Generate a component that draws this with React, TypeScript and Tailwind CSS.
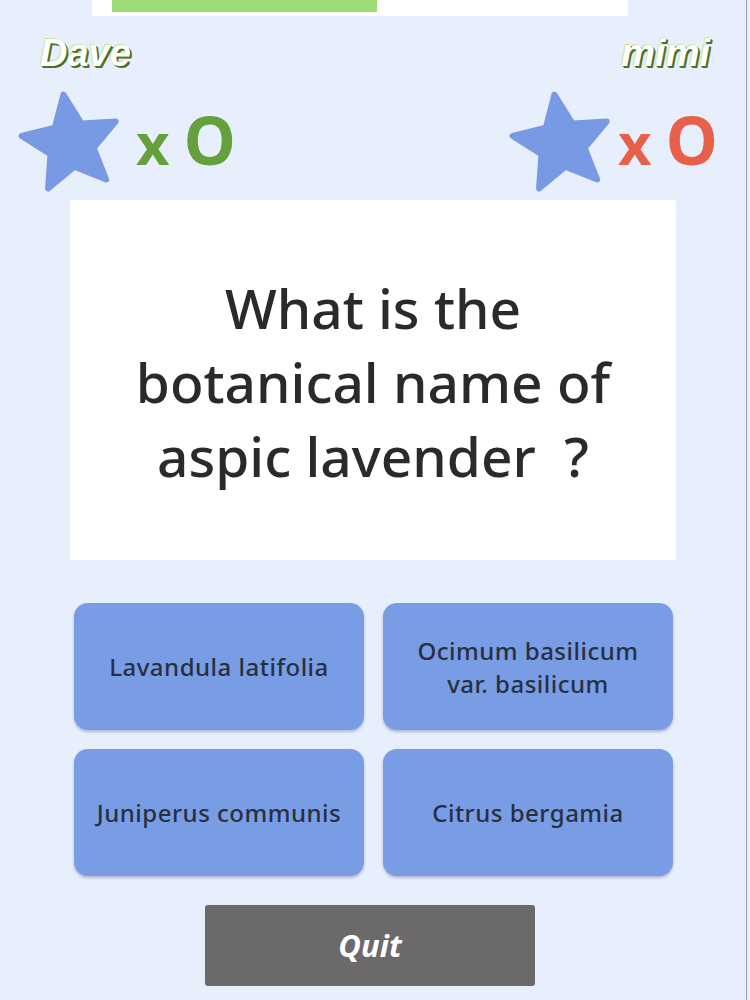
import React from "react";

function Star() {
  const pts: string[] = [];
  const R = 50;
  const r = 23;
  for (let i = 0; i < 10; i++) {
    const a = ((-98.7 + i * 36) * Math.PI) / 180;
    const rad = i % 2 === 0 ? R : r;
    pts.push(`${(Math.cos(a) * rad).toFixed(2)},${(Math.sin(a) * rad).toFixed(2)}`);
  }
  return (
    <svg width="120" height="120" viewBox="-60 -60 120 120" className="shrink-0">
      <polygon
        points={pts.join(" ")}
        fill="#7899e3"
        stroke="#7899e3"
        strokeWidth="6"
        strokeLinejoin="round"
      />
    </svg>
  );
}

export default function App() {
  const nameStyle =
    "text-[38px] font-bold italic text-white leading-none [text-shadow:1px_1px_0_#4f6f22,2px_2px_0_#4f6f22,-1px_-1px_0_#cfe3a8]";
  const answers = [
    ["Lavandula latifolia"],
    ["Ocimum basilicum", "var. basilicum"],
    ["Juniperus communis"],
    ["Citrus bergamia"],
  ];
  return (
    <div className="relative w-[750px] h-[1000px] overflow-hidden bg-[#e8effc] flex flex-col [font-family:'Noto_Sans',sans-serif]">
      <div className="absolute right-[3px] top-0 h-full w-[1px] bg-[#9a9ea6]" />
      {/* progress */}
      <div className="ml-[92px] w-[536px] h-[16px] bg-white">
        <div className="ml-[20px] w-[265px] h-[12px] bg-[#9bdc74]" />
      </div>
      {/* names */}
      <div className="h-[68px] flex justify-between items-start pt-[18px] px-[40px] [font-family:'Liberation_Sans',sans-serif]">
        <span className={nameStyle}>Dave</span>
        <span className={nameStyle}>mimi</span>
      </div>
      {/* scores */}
      <div className="h-[116px] flex justify-between items-start [font-family:'Open_Sans',sans-serif]">
        <div className="flex items-center ml-[11px]">
          <Star />
          <div className="ml-[5px] -mt-[10px] flex items-baseline font-bold text-[#64a03c] leading-none">
            <span className="text-[58px]">x</span>
            <span className="text-[66px] ml-[14px]">O</span>
          </div>
        </div>
        <div className="flex items-center mr-[32px]">
          <Star />
          <div className="-ml-[4px] -mt-[10px] flex items-baseline font-bold text-[#e8604a] leading-none">
            <span className="text-[58px]">x</span>
            <span className="text-[66px] ml-[14px]">O</span>
          </div>
        </div>
      </div>
      {/* question */}
      <div className="ml-[70px] w-[606px] h-[360px] bg-white flex items-center justify-center">
        <div className="text-center text-[55px] leading-[74px] font-medium text-[#2a2a2a] pt-[4px]">
          What is the
          <br />
          botanical name of
          <br />
          aspic lavender&nbsp;&nbsp;?
        </div>
      </div>
      {/* answers */}
      <div className="mt-[43px] ml-[74px] w-[599px] grid grid-cols-2 gap-x-[19px] gap-y-[19px]">
        {answers.map((a, i) => (
          <div
            key={i}
            className="h-[127px] rounded-[14px] bg-[#789de5] shadow-[0_2px_3px_rgba(60,80,130,0.35)] flex flex-col items-center justify-center text-[24px] leading-[33px] font-medium tracking-[0.5px] text-[#28303f]"
          >
            {a.map((l, j) => (
              <span key={j}>{l}</span>
            ))}
          </div>
        ))}
      </div>
      {/* quit */}
      <div className="mt-[29px] ml-[205px] w-[330px] h-[81px] rounded-[3px] bg-[#6b696a] flex items-center justify-center">
        <span className="text-[31px] font-bold italic text-white [font-family:'Open_Sans',sans-serif]">
          Quit
        </span>
      </div>
    </div>
  );
}
